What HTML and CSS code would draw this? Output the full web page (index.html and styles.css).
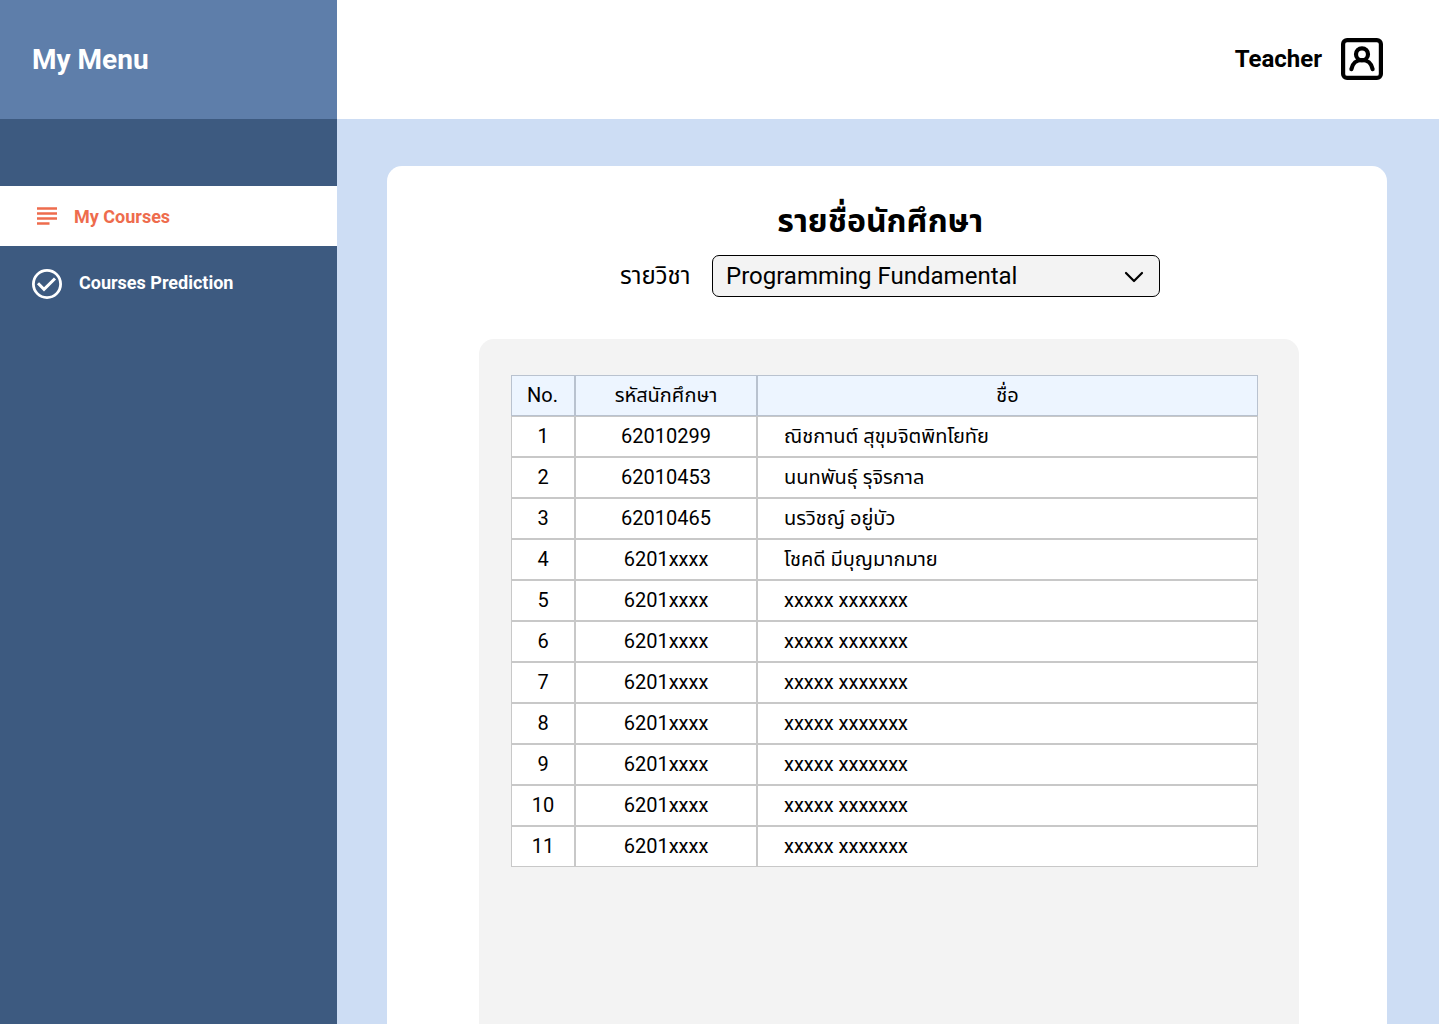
FILE: index.html
```html
<!DOCTYPE html>
<html lang="th">
<head>
<meta charset="utf-8">
<title>My Courses</title>
<link rel="stylesheet" href="styles.css">
</head>
<body>
<div class="app">
  <aside class="sidebar">
    <div class="brand">My Menu</div>
    <nav class="menu">
      <a class="item active">
        <svg class="lines" width="20" height="18" viewBox="0 0 20 18"><path d="M0 1.500h20M0 6.500h20M0 11.500h20M0 16.500h12.500" stroke="currentColor" stroke-width="2.700"/></svg>
        <span>My Courses</span>
      </a>
      <a class="item">
        <svg class="check" width="30" height="30" viewBox="0 0 30 30" fill="none" stroke="currentColor" stroke-width="3"><circle cx="15" cy="15" r="13.600" stroke-width="2.800"/><path d="M6 14.300l6 6L23 9.500"/></svg>
        <span>Courses Prediction</span>
      </a>
    </nav>
  </aside>
  <div class="page">
    <header class="topbar">
      <span class="role">Teacher</span>
      <svg width="42" height="42" viewBox="0 0 42 42" fill="none" stroke="#000" stroke-width="4.200"><rect x="2.100" y="2.100" width="37.800" height="37.800" rx="4"/><circle cx="21" cy="16.300" r="6"/><path d="M10.400 31.200c1-5.800 5.300-9.200 10.600-9.200s9.600 3.400 10.600 9.200" stroke-linecap="round"/></svg>
    </header>
    <main class="content">
      <section class="card">
        <h1>รายชื่อนักศึกษา</h1>
        <div class="filter">
          <span class="label">รายวิชา</span>
          <div class="select">
            <span>Programming Fundamental</span>
            <svg width="20" height="12" viewBox="0 0 20 12" fill="none" stroke="#000" stroke-width="2.200" stroke-linecap="round" stroke-linejoin="round"><path d="M2 2l8 8 8-8"/></svg>
          </div>
        </div>
        <div class="panel">
          <table>
            <colgroup><col class="c1"><col class="c2"><col class="c3"></colgroup>
            <thead><tr><th>No.</th><th>รหัสนักศึกษา</th><th>ชื่อ</th></tr></thead>
            <tbody>
              <tr><td>1</td><td>62010299</td><td>ณิชกานต์ สุขุมจิตพิทโยทัย</td></tr>
              <tr><td>2</td><td>62010453</td><td>นนทพันธุ์ รุจิรกาล</td></tr>
              <tr><td>3</td><td>62010465</td><td>นรวิชญ์ อยู่บัว</td></tr>
              <tr><td>4</td><td>6201xxxx</td><td>โชคดี มีบุญมากมาย</td></tr>
              <tr><td>5</td><td>6201xxxx</td><td>xxxxx xxxxxxx</td></tr>
              <tr><td>6</td><td>6201xxxx</td><td>xxxxx xxxxxxx</td></tr>
              <tr><td>7</td><td>6201xxxx</td><td>xxxxx xxxxxxx</td></tr>
              <tr><td>8</td><td>6201xxxx</td><td>xxxxx xxxxxxx</td></tr>
              <tr><td>9</td><td>6201xxxx</td><td>xxxxx xxxxxxx</td></tr>
              <tr><td>10</td><td>6201xxxx</td><td>xxxxx xxxxxxx</td></tr>
              <tr><td>11</td><td>6201xxxx</td><td>xxxxx xxxxxxx</td></tr>
            </tbody>
          </table>
        </div>
      </section>
    </main>
  </div>
</div>
</body>
</html>
```
FILE: styles.css
```css
* { box-sizing: border-box; }
body { margin: 0; font-family: Roboto, "Noto Sans Thai", "Noto Sans", sans-serif; color: #000; }
.app { display: flex; height: 1024px; overflow: hidden; }
.sidebar { width: 337px; flex: none; background: #3d5a80; color: #fff; }
.brand { height: 119px; padding-left: 32px; background: #5e7eaa; font-size: 28px; font-weight: 700; line-height: 119px; }
.menu { padding-top: 67px; }
.item { display: flex; align-items: center; height: 60px; font-size: 18px; font-weight: 700; line-height: 22px; }
.item.active { background: #fff; color: #ee6c4d; padding: 1px 0 0 37px; gap: 17px; }
.lines { margin-bottom: 2px; }
.item:not(.active) { height: 76px; padding-left: 32px; gap: 17px; }
.item:not(.active) span { margin-top: -2px; }
.page { flex: 1; display: flex; flex-direction: column; }
.topbar { height: 119px; flex: none; display: flex; align-items: center; justify-content: flex-end; gap: 19px; padding: 0 56px 1px 0; background: #fff; }
.role { font-size: 24px; font-weight: 700; }
.content { flex: 1; padding: 47px 52.500px 0 50px; background: #cdddf4; display: flex; }
.card { flex: 1; display: flex; flex-direction: column; background: #fff; border-radius: 15px 15px 0 0; }
h1 { margin: 0; height: 89px; padding: 32px 13px 0 0; font-size: 32px; line-height: 46px; font-weight: 700; text-align: center; }
.filter { display: flex; height: 42px; padding-left: 233px; align-items: center; }
.label { width: 92px; font-size: 24px; line-height: 42px; }
.select { display: flex; align-items: center; justify-content: space-between; width: 448px; height: 42px; padding: 0 15px 0 13px; background: #f3f3f3; border: 1px solid #000; border-radius: 7px; font-size: 24px; }
.select svg { margin-top: 2px; }
.panel { flex: 1; width: 820px; margin: 41.500px 0 0 92px; padding: 36.500px 0 0 32px; background: #f3f3f3; border-radius: 15px 15px 0 0; }
table { width: 747px; table-layout: fixed; border-spacing: 0; font-size: 20px; line-height: 24px; }
.c1 { width: 64px; }
.c2 { width: 182px; }
.c3 { width: 501px; }
th, td { height: 41px; padding: 0 0 2px; border: 1px solid #c8c8c8; background: #fff; font-weight: 400; text-align: center; }
th { background: #edf5ff; border-color: #b9c2cf; }
th:first-child { padding-right: 1px; }
td:last-child { text-align: left; padding-left: 26px; }
```
